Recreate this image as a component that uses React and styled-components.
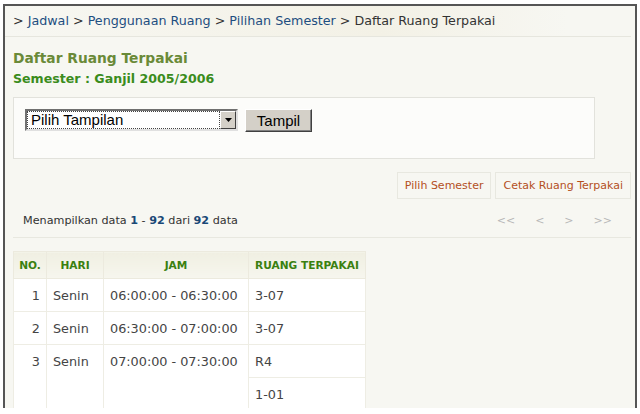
import React from "react";
import styled, { createGlobalStyle } from "styled-components";

const GlobalStyle = createGlobalStyle`
  html, body {
    margin: 0;
    padding: 0;
    background: #ffffff;
  }
  body {
    font-family: "DejaVu Sans", Verdana, sans-serif;
  }
`;

const rows = [
  { no: 1, hari: "Senin", jam: "06:00:00 - 06:30:00", ruang: ["3-07"] },
  { no: 2, hari: "Senin", jam: "06:30:00 - 07:00:00", ruang: ["3-07"] },
  { no: 3, hari: "Senin", jam: "07:00:00 - 07:30:00", ruang: ["R4", "1-01"] },
];

const App = () => {
  return (
    <>
      <GlobalStyle />
      <Frame>
        <Breadcrumb>
          <Crumb>&gt; </Crumb>
          <CrumbLink>Jadwal</CrumbLink>
          <Crumb> &gt; </Crumb>
          <CrumbLink>Penggunaan Ruang</CrumbLink>
          <Crumb> &gt; </Crumb>
          <CrumbLink>Pilihan Semester</CrumbLink>
          <Crumb> &gt; Daftar Ruang Terpakai</Crumb>
        </Breadcrumb>
        <Content>
          <Title>Daftar Ruang Terpakai</Title>
          <SubTitle>Semester : Ganjil 2005/2006</SubTitle>
          <FormBox>
            <SelectBox>
              <SelectText>Pilih Tampilan</SelectText>
              <SelectArrow>
                <svg width="7" height="4" viewBox="0 0 7 4">
                  <path d="M0 0h7L3.5 4z" fill="#000" />
                </svg>
              </SelectArrow>
            </SelectBox>
            <Button>Tampil</Button>
          </FormBox>
          <Actions>
            <ActionLink>Pilih Semester</ActionLink>
            <ActionLink>Cetak Ruang Terpakai</ActionLink>
          </Actions>
          <InfoBar>
            <Info>
              Menampilkan data <Num>1</Num> - <Num>92</Num> dari <Num>92</Num> data
            </Info>
            <Pager>
              <PageLink>&lt;&lt;</PageLink>
              <PageLink>&lt;</PageLink>
              <PageLink>&gt;</PageLink>
              <PageLink>&gt;&gt;</PageLink>
            </Pager>
          </InfoBar>
          <Table>
            <thead>
              <tr>
                <Th $w={33}>NO.</Th>
                <Th $w={57}>HARI</Th>
                <Th $w={145}>JAM</Th>
                <Th $w={117}>RUANG TERPAKAI</Th>
              </tr>
            </thead>
            <tbody>
              {rows.map(r =>
                r.ruang.map((ru, i) => (
                  <tr key={`${r.no}-${i}`}>
                    {i === 0 && (
                      <>
                        <Td rowSpan={r.ruang.length} $align="right">{r.no}</Td>
                        <Td rowSpan={r.ruang.length}>{r.hari}</Td>
                        <Td rowSpan={r.ruang.length}>{r.jam}</Td>
                      </>
                    )}
                    <Td>{ru}</Td>
                  </tr>
                ))
              )}
            </tbody>
          </Table>
        </Content>
      </Frame>
    </>
  );
};

const Frame = styled.div`
  margin: 4px 3px 0 3px;
  height: 404px;
  border: 2px solid #555;
  border-bottom: none;
  background: #f7f7f2;
  overflow: hidden;
  box-sizing: border-box;
`;
const Breadcrumb = styled.div`
  height: 31px;
  box-sizing: border-box;
  padding: 7px 0 0 8px;
  margin-right: 4px;
  border-bottom: 1px solid #e6e6de;
  background: linear-gradient(90deg, #f7f7f2 0%, #f3f1e6 60%, #f7f7f2 90%);
  font-size: 12.7px;
  color: #333;
  white-space: nowrap;
`;
const Crumb = styled.span`
  color: #333;
`;
const CrumbLink = styled.span`
  color: #1e4e80;
`;
const Content = styled.div`
  padding: 12px 4px 0 8px;
`;
const Title = styled.div`
  font-size: 13.8px;
  font-weight: bold;
  color: #6a8a38;
  line-height: 18px;
`;
const SubTitle = styled.div`
  margin-top: 4px;
  font-size: 12.6px;
  font-weight: bold;
  color: #3a8c1c;
  line-height: 16px;
`;
const FormBox = styled.div`
  margin-top: 10px;
  width: 582px;
  height: 62px;
  box-sizing: border-box;
  border: 1px solid #e2e2dc;
  background: #fcfcfa;
  display: flex;
  align-items: flex-start;
  gap: 7px;
  padding: 11px 0 0 11px;
`;
const SelectBox = styled.div`
  width: 213px;
  height: 22px;
  box-sizing: border-box;
  border: 2px solid;
  border-color: #707070 #e0e0e0 #e0e0e0 #707070;
  background: #fff;
  display: flex;
  align-items: stretch;
`;
const SelectText = styled.div`
  flex: 1;
  font-family: "Liberation Sans", Arial, sans-serif;
  font-size: 15px;
  line-height: 16px;
  padding: 1px 4px;
  outline: 1px dotted #444;
  outline-offset: -1px;
`;
const SelectArrow = styled.div`
  width: 16px;
  background: #d4d0c8;
  border: 1px solid;
  border-color: #fff #404040 #404040 #fff;
  display: flex;
  align-items: center;
  justify-content: center;
  box-sizing: border-box;
`;
const Button = styled.div`
  width: 67px;
  height: 23px;
  box-sizing: border-box;
  border: 1px solid;
  border-color: #fff #404040 #404040 #fff;
  box-shadow: inset -1px -1px 0 #808080;
  background: #d4d0c8;
  font-family: "Liberation Sans", Arial, sans-serif;
  font-size: 15px;
  display: flex;
  align-items: center;
  justify-content: center;
  color: #000;
`;
const Actions = styled.div`
  margin-top: 13px;
  display: flex;
  justify-content: flex-end;
  gap: 4px;
`;
const ActionLink = styled.div`
  height: 27px;
  box-sizing: border-box;
  padding: 0 7px;
  border: 1px solid #e8e8e0;
  display: flex;
  align-items: center;
  font-size: 11px;
  color: #b4501e;
`;
const InfoBar = styled.div`
  margin-top: 12px;
  height: 27px;
  box-sizing: border-box;
  border-bottom: 1px solid #e8e8e0;
  display: flex;
  justify-content: space-between;
  align-items: center;
  padding: 0 19px 8px 10px;
`;
const Info = styled.div`
  font-size: 11.2px;
  color: #333;
`;
const Num = styled.b`
  color: #1a4876;
`;
const Pager = styled.div`
  display: flex;
  gap: 20px;
  font-size: 11px;
  color: #b8b8b8;
`;
const PageLink = styled.span``;
const Table = styled.table`
  margin-top: 13px;
  border-collapse: collapse;
  background: #fff;
  font-size: 12.8px;
`;
const Th = styled.th`
  width: ${p => p.$w}px;
  height: 27px;
  padding: 0 5px;
  box-sizing: border-box;
  font-size: 10.6px;
  font-weight: bold;
  color: #3a8010;
  text-align: center;
  background: linear-gradient(180deg, #f0efe2 0%, #f6f6ee 100%);
  border: 1px solid #eceade;
  white-space: nowrap;
`;
const Td = styled.td`
  height: 33px;
  padding: 0 6px;
  box-sizing: border-box;
  color: #444;
  text-align: ${p => p.$align || "left"};
  vertical-align: top;
  padding-top: 9px;
  border: 1px solid #eeede4;
  white-space: nowrap;
`;

export default App;
